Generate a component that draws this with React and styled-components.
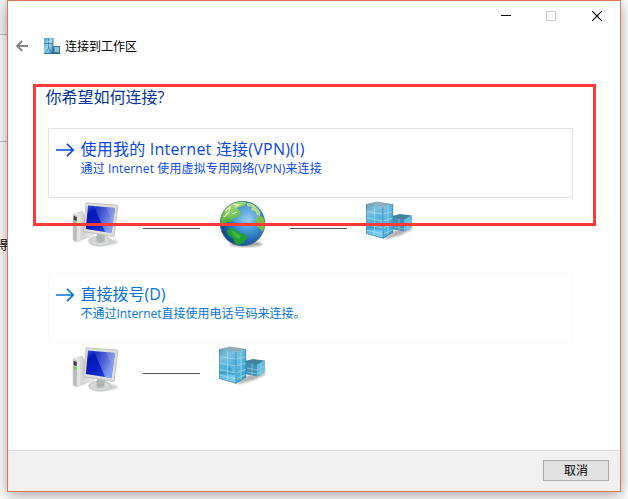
import React from "react";
import styled, { createGlobalStyle } from "styled-components";

const Global = createGlobalStyle`
  * { box-sizing: border-box; }
  body { margin: 0; background: #fff; overflow: hidden; }
  button { font: inherit; }
`;

const Desktop = styled.div`
  position: relative;
  display: flex;
  width: 628px;
  height: 499px;
  overflow: hidden;
  background: #fff;
  font-family: "Open Sans", "Noto Sans CJK SC", sans-serif;
  font-size: 12px;
`;

const Backdrop = styled.div`
  width: 7px;
  flex: none;
  display: flex;
  flex-direction: column;
`;

const BackPane = styled.div`
  height: ${(p) => p.$h}px;
  background: ${(p) => p.$bg};
  border-bottom: 1px solid #c0c0c0;
`;

const BackText = styled.span`
  margin: 95px 0 0 -4px;
  width: 12px;
  line-height: 18px;
  white-space: nowrap;
  color: #000;
`;

const Window = styled.main`
  position: relative;
  display: flex;
  flex-direction: column;
  width: 614px;
  height: 492px;
  background: #fff;
  border: 1px solid #dc7850;
  box-shadow: 0 3px 14px rgba(0, 0, 0, 0.38);
`;

const TitleBar = styled.div`
  display: flex;
  justify-content: flex-end;
  height: 30px;
`;

const Caption = styled.button`
  width: 46px;
  height: 29px;
  padding: 0;
  border: 0;
  background: transparent;
  display: grid;
  place-items: center;
`;

const Header = styled.header`
  display: flex;
  align-items: center;
  height: 30px;
  padding-left: 8px;
  color: #000;
`;

const HeaderIcon = styled.span`
  margin-left: 16px;
`;

const HeaderText = styled.h1`
  margin: 1px 0 0 5px;
  font-size: 12px;
  line-height: 18px;
  font-weight: 400;
`;

const Body = styled.section`
  flex: 1;
  padding: 24px 47px 0 40px;
`;

const Question = styled.h2`
  margin: 0 0 0 -2.5px;
  height: 43px;
  font-size: 16px;
  line-height: 25px;
  font-weight: 400;
  color: #003399;
`;

const Command = styled.button`
  display: flex;
  width: 525px;
  height: 70px;
  padding: 9px 0 0 7px;
  text-align: left;
  background: #fff;
  border: 1px solid ${(p) => (p.$active ? "#e3e3e3" : "#fbfbfb")};
  color: ${(p) => (p.$active ? "#0a48e4" : "#0374da")};
`;

const CommandTexts = styled.span`
  display: flex;
  flex-direction: column;
  padding-left: 5.5px;
  white-space: nowrap;
`;

const CommandTitle = styled.span`
  font-size: 16px;
  line-height: 22px;
  letter-spacing: ${(p) => p.$spacing || 0}px;
`;

const CommandNote = styled.span`
  font-size: 12px;
  line-height: 17px;
  letter-spacing: ${(p) => p.$spacing || 0}px;
`;

const Route = styled.div`
  display: flex;
  align-items: flex-start;
  height: 75px;
  padding: 2px 0 0 24px;
`;

const Link = styled.span`
  width: 57px;
  height: 1px;
  margin: 28px 19px 0 23px;
  background: #5a5759;
`;

const Footer = styled.footer`
  display: flex;
  align-items: flex-start;
  justify-content: flex-end;
  height: 41px;
  padding: 9px 11px 0 0;
  background: #f0f0f0;
  border-top: 1px solid #dfdfdf;
`;

const Cancel = styled.button`
  width: 66px;
  height: 21px;
  padding: 0;
  border: 1px solid #adadad;
  background: #e1e1e1;
  line-height: 19px;
  color: #000;
`;

const Highlight = styled.div`
  position: absolute;
  left: 33px;
  top: 84px;
  width: 563px;
  height: 142px;
  border: 3px solid #ff3838;
  pointer-events: none;
`;

const Icon = styled.svg`
  display: block;
  flex: none;
`;

const Arrow = () => (
  <Icon width="19" height="22" viewBox="0 0 19 22" fill="none" stroke="currentColor" strokeWidth="1.7">
    <path d="M0 12H17.3M11 5.9L17.2 12L11 18.1" />
  </Icon>
);

const BackArrow = () => (
  <Icon width="12" height="12" viewBox="0 0 12 12" fill="none" stroke="#858585" strokeWidth="2">
    <path d="M1 6H12M6.2 1L1.2 6L6.2 11" />
  </Icon>
);

const WorkplaceIcon = () => (
  <Icon width="16" height="16" viewBox="0 0 16 16">
    <defs>
      <linearGradient id="tower" x2="1" y2="1">
        <stop stopColor="#4a9cc2" />
        <stop offset=".5" stopColor="#9bd8ef" />
        <stop offset="1" stopColor="#2f86b1" />
      </linearGradient>
    </defs>
    <path d="M0 0H9V16H0Z" fill="url(#tower)" />
    <path d="M9 8H16V16H9Z" fill="#3d7f9d" />
    <path d="M10.5 10H15V14H10.5Z" fill="#86c4df" />
    <path d="M4.5 0V10M0 5.5H9M1 15L4.5 10L8 15" stroke="#2c7498" strokeWidth=".7" fill="none" />
    <path d="M9 0V16" stroke="#275f7b" strokeWidth=".8" />
    <path d="M1 3.5H8M10 9.5H15" stroke="#b7e2f3" strokeWidth=".6" fill="none" />
    <path d="M0 15.6H16" stroke="#205b78" strokeWidth=".8" />
  </Icon>
);

const Computer = () => (
  <Icon width="48" height="48" viewBox="0 0 48 48">
    <defs>
      <linearGradient id="screen" x1="0" y1="0" x2=".7" y2="1">
        <stop stopColor="#3d5bdf" />
        <stop offset=".25" stopColor="#0719b8" />
        <stop offset=".6" stopColor="#0a1fbd" />
        <stop offset="1" stopColor="#2446de" />
      </linearGradient>
      <linearGradient id="glare" x1="0" y1="0" x2=".9" y2=".35">
        <stop stopColor="#b9d0ff" stopOpacity=".08" />
        <stop offset="1" stopColor="#c5d8ff" stopOpacity=".6" />
      </linearGradient>
      <linearGradient id="case" x2="1">
        <stop stopColor="#f3f3f3" />
        <stop offset=".5" stopColor="#cfcfcf" />
        <stop offset="1" stopColor="#f0f0f0" />
      </linearGradient>
      <radialGradient id="foot">
        <stop stopColor="#a2a5a5" />
        <stop offset=".6" stopColor="#dcdede" />
        <stop offset="1" stopColor="#c4c6c6" />
      </radialGradient>
      <filter id="soft"><feGaussianBlur stdDeviation="1.3" /></filter>
    </defs>
    <ellipse cx="33" cy="42" rx="13" ry="3" fill="#777" opacity=".4" filter="url(#soft)" />
    <path d="M1 14L10 11L22 30V35L5 42L1 40Z" fill="url(#case)" stroke="#d4d4d4" strokeWidth=".6" />
    <path d="M1 14L5 15.5V42L1 40Z" fill="#bdbdbd" />
    <path d="M1.7 16L4.6 17V21L1.7 20Z" fill="#3a3a3a" />
    <path d="M2 21.5L4.8 22.5V25L2 24Z" fill="#62e334" />
    <path d="M7.5 17V39M10 37L18 34.5" stroke="#e6e6e6" strokeWidth="1" />
    <path d="M25 33L33 34L34 41H25Z" fill="#b8bbbb" />
    <ellipse cx="28" cy="41" rx="11.5" ry="5.2" fill="url(#foot)" stroke="#ccc" strokeWidth=".7" />
    <path d="M24 36Q29 34 33 37L32 41H25Z" fill="#aeb3b2" />
    <path d="M14 3.5Q14 2.7 15 2.8L44.5 5Q46 5.1 45.8 6.4L42.2 35.6Q42 36.7 40.5 36.4L12.6 31.8Q11.5 31.6 11.6 30.5Z" fill="#dedfdd" stroke="#aaadaa" strokeWidth=".7" />
    <path d="M16 5.5L43 8L39.5 33L13.8 29Z" fill="url(#screen)" />
    <path d="M22 6.1L43 8L39.5 33L33 32Z" fill="url(#glare)" />
    <path d="M34 7.2L43 8L41 22Z" fill="#fff" opacity=".12" />
  </Icon>
);

const Globe = () => (
  <Icon width="48" height="48" viewBox="0 0 48 48">
    <defs>
      <radialGradient id="ocean" cx=".62" cy=".42" r=".62">
        <stop stopColor="#83c8ef" />
        <stop offset=".4" stopColor="#4496d4" />
        <stop offset=".78" stopColor="#2065aa" />
        <stop offset="1" stopColor="#134a80" />
      </radialGradient>
      <linearGradient id="land" y2="1" x2=".4">
        <stop stopColor="#c0e58c" />
        <stop offset=".5" stopColor="#72c64c" />
        <stop offset="1" stopColor="#2ca03a" />
      </linearGradient>
      <clipPath id="earth"><circle cx="23.5" cy="23.5" r="22.5" /></clipPath>
      <filter id="blur"><feGaussianBlur stdDeviation="1.2" /></filter>
    </defs>
    <ellipse cx="27" cy="44" rx="16" ry="3" fill="#444" opacity=".5" filter="url(#blur)" />
    <circle cx="23.5" cy="23.5" r="22.5" fill="url(#ocean)" />
    <g clipPath="url(#earth)">
      <path d="M1 16L5 9L10 4L18 1L27 2L26 5L21 7L18 8L21 11L22 15L19 17L14 19L12 22L8 22L7 26L3 24L1 27Z" fill="url(#land)" />
      <path d="M28 3L34 4L38 8L41 12L41 16L38 15L36 11L32 10L33 7L28 6Z" fill="#a6d971" />
      <path d="M40 16L44 17L47 23L45 33L41 29L37 26L36 22L38 18Z" fill="#7cbf47" />
      <path d="M8 31L11 28L16 29L20 33L26 34L28 38L24 43L20 45L16 43L14 38L9 35Z" fill="#22a034" />
      <path d="M6 11L11 7L10 12L5 17M14 4L20 5L16 7M13 14L18 12" stroke="#e4efb8" strokeWidth="1.3" fill="none" />
      <path d="M12 30L18 33L22 36L20 39L15 36Z" fill="#4bbd4a" opacity=".8" />
      <ellipse cx="24" cy="12" rx="18" ry="11" fill="#fff" opacity=".13" />
    </g>
    <circle cx="23.5" cy="23.5" r="22.2" fill="none" stroke="#4c7388" strokeWidth=".6" />
  </Icon>
);

const Building = () => (
  <Icon width="48" height="48" viewBox="0 0 48 48">
    <defs>
      <linearGradient id="glass" x2=".3" y2="1">
        <stop stopColor="#5fa3c6" />
        <stop offset=".3" stopColor="#79c0e0" />
        <stop offset=".6" stopColor="#4eb0dc" />
        <stop offset="1" stopColor="#75cdf0" />
      </linearGradient>
      <linearGradient id="side" x2=".8" y2="1">
        <stop stopColor="#8ac2dc" />
        <stop offset=".45" stopColor="#5ab5dd" />
        <stop offset="1" stopColor="#2e9fd2" />
      </linearGradient>
      <filter id="shade"><feGaussianBlur stdDeviation="1" /></filter>
    </defs>
    <path d="M17 38L30 30L45 27L47 29L35 35L21 39Z" fill="#555" opacity=".45" filter="url(#shade)" />
    <path d="M26 16L34 14L46 15.5L40 19V31L26 29Z" fill="#42809c" />
    <path d="M27 17L38 19.5V31.5L27 29Z" fill="#438fb1" />
    <path d="M38 19.5L46 15.8V27L38 31.5Z" fill="#65bbdf" />
    <path d="M28 23L38 25L46 21M28 27L38 29L46 25M33 19V30M42 18V29" stroke="#a1d5e6" strokeWidth=".6" fill="none" />
    <path d="M0 4.5L11 2L27 4.5L17 6.5Z" fill="#8db1c1" stroke="#547987" strokeWidth=".5" />
    <path d="M0 4.5L17 6.5V38.5L0 33.5Z" fill="url(#glass)" />
    <path d="M17 6.5L27 4.5V32.5L17 38.5Z" fill="url(#side)" />
    <path d="M1 28L5 25L8 27L11 21L14 28L16 26V30L1 29Z" fill="#2687bb" opacity=".5" />
    <path d="M8.5 6V36M22 6V35.5M0 11.5L17 14L27 11.5M0 18L17 21L27 18M0 24.5L17 28L27 24.5M0 30L17 34L27 29.5" stroke="#b1def0" strokeWidth=".7" fill="none" />
    <path d="M.3 4.5V33.5L17 38.3L26.8 32.3V4.5M17 7V38.3" stroke="#3a7590" strokeWidth=".6" fill="none" />
  </Icon>
);

export default function App() {
  return (
    <>
      <Global />
      <Desktop>
        <Backdrop>
          <BackPane $h={35} $bg="#f5f5f5" />
          <BackPane $h={107} $bg="#fff" />
          <BackText>得</BackText>
        </Backdrop>
        <Window>
          <TitleBar>
            <Caption aria-label="最小化">
              <Icon width="12" height="11"><path d="M2 5.5H12" stroke="#000" /></Icon>
            </Caption>
            <Caption aria-label="最大化" disabled>
              <Icon width="10" height="10"><path d="M.5 .5H9.5V9.5H.5Z" fill="none" stroke="#ccc" /></Icon>
            </Caption>
            <Caption aria-label="关闭">
              <Icon width="10" height="10"><path d="M0 0L10 10M10 0L0 10" stroke="#000" strokeWidth="1.2" /></Icon>
            </Caption>
          </TitleBar>
          <Header>
            <BackArrow />
            <HeaderIcon><WorkplaceIcon /></HeaderIcon>
            <HeaderText>连接到工作区</HeaderText>
          </Header>
          <Body>
            <Question>你希望如何连接?</Question>
            <Command $active>
              <Arrow />
              <CommandTexts>
                <CommandTitle $spacing={0.22}>使用我的 Internet 连接(VPN)(I)</CommandTitle>
                <CommandNote $spacing={0.13}>通过 Internet 使用虚拟专用网络(VPN)来连接</CommandNote>
              </CommandTexts>
            </Command>
            <Route>
              <Computer />
              <Link />
              <Globe />
              <Link />
              <Building />
            </Route>
            <Command>
              <Arrow />
              <CommandTexts>
                <CommandTitle>直接拨号(D)</CommandTitle>
                <CommandNote>不通过Internet直接使用电话号码来连接。</CommandNote>
              </CommandTexts>
            </Command>
            <Route>
              <Computer />
              <Link />
              <Building />
            </Route>
          </Body>
          <Footer>
            <Cancel>取消</Cancel>
          </Footer>
        </Window>
        <Highlight />
      </Desktop>
    </>
  );
}
